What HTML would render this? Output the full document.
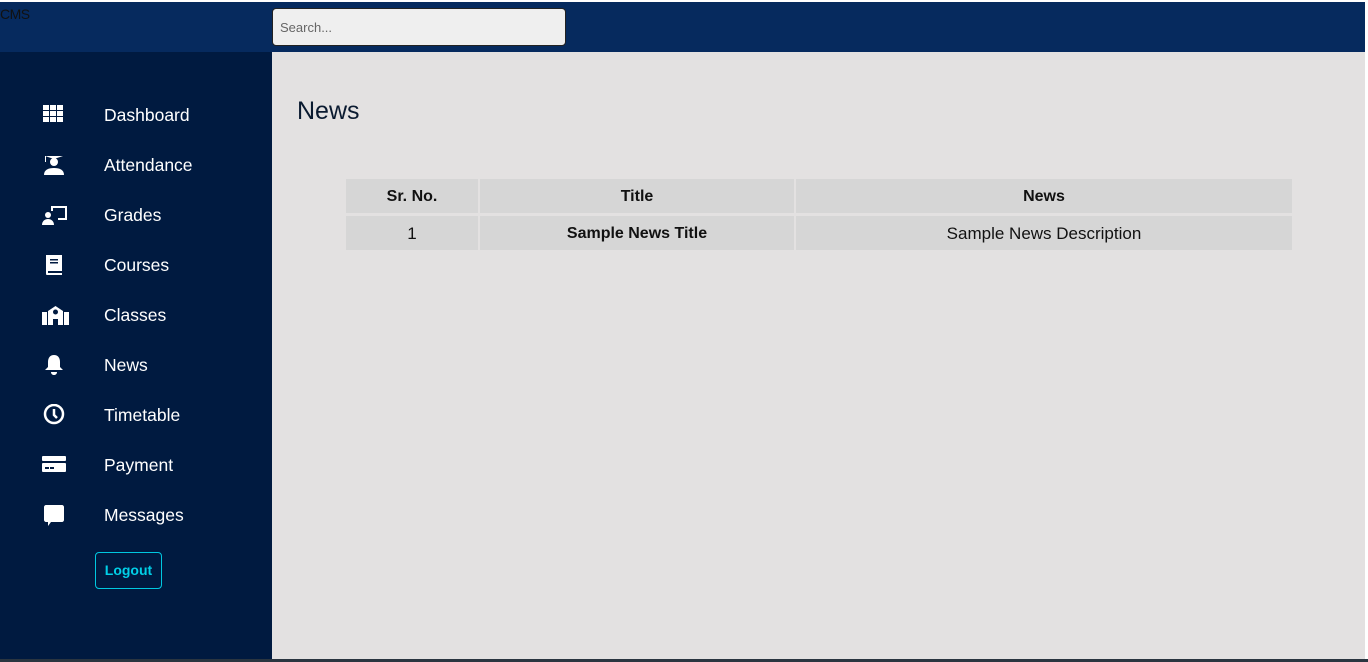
<!DOCTYPE html>
<html><head><style>
*{margin:0;padding:0;box-sizing:border-box}
body{width:1368px;height:662px;overflow:hidden;background:#fff;font-family:"Liberation Sans",sans-serif;position:relative}
.top{position:absolute;left:0;top:2px;width:1365px;height:50px;background:#062a5e}
.cms{position:absolute;left:0;top:6px;font-size:14px;color:#111;letter-spacing:-0.5px}
.search{position:absolute;left:272px;top:8px;width:294px;height:38px;background:#efefef;border:1px solid #222;border-radius:4px;font-size:13px;color:#666;padding:11px 7px}
.side{position:absolute;left:0;top:52px;width:272px;height:607px;background:#001a40}
.main{position:absolute;left:272px;top:52px;width:1093px;height:607px;background:#e3e1e1}
.bottom{position:absolute;left:0;top:659px;width:1368px;height:3px;background:#2a3540}
.item{position:absolute;left:0;height:30px;width:272px;color:#fff;font-size:17.5px}
.item svg{position:absolute;left:42px;top:4px}
.item span{position:absolute;left:104px;top:5px}
.logout{position:absolute;left:95px;top:552px;width:67px;height:37px;border:1px solid #00c8e0;border-radius:4px;color:#00d0e8;font-weight:bold;font-size:14px;text-align:center;line-height:35px}
h1{position:absolute;left:297px;top:97px;font-size:25px;font-weight:normal;color:#0a1a30}
.c{position:absolute;background:#d6d6d6;font-size:17px;color:#111;text-align:center;line-height:38px}
.b{font-weight:bold;font-size:16px}
</style></head><body>
<div class="top"></div>
<div class="cms">CMS</div>
<div class="search">Search...</div>
<div class="side"></div>
<div class="main"></div>
<div class="bottom"></div>

<div class="item" style="top:100px"><svg width="24" height="20" viewBox="0 0 24 20" fill="#fff"><rect x="1" y="1" width="6" height="5"/><rect x="8" y="1" width="6" height="5"/><rect x="15" y="1" width="6" height="5"/><rect x="1" y="7" width="6" height="5"/><rect x="8" y="7" width="6" height="5"/><rect x="15" y="7" width="6" height="5"/><rect x="1" y="13" width="6" height="5"/><rect x="8" y="13" width="6" height="5"/><rect x="15" y="13" width="6" height="5"/></svg><span>Dashboard</span></div>
<div class="item" style="top:150px"><svg width="24" height="22" viewBox="0 0 24 22" fill="#fff"><path d="M3 2h18l-9 3z"/><circle cx="12" cy="8" r="4"/><path d="M2 21c0-5 4-7 10-7s10 2 10 7z"/><rect x="3" y="2" width="1" height="6"/></svg><span>Attendance</span></div>
<div class="item" style="top:200px"><svg width="26" height="22" viewBox="0 0 26 22" fill="#fff"><path d="M9 2h16v14h-9v-2h7V4H11v3H9z"/><circle cx="6" cy="11" r="3"/><path d="M0 21c0-4 3-6 6-6s6 2 6 6z"/></svg><span>Grades</span></div>
<div class="item" style="top:250px"><svg width="24" height="22" viewBox="0 0 24 22" fill="#fff"><path d="M4 1h16v16H6v2h14v2H5c-1 0-1-1-1-2z"/><rect x="8" y="5" width="8" height="1.5" fill="#001a40"/><rect x="8" y="8" width="8" height="1.5" fill="#001a40"/></svg><span>Courses</span></div>
<div class="item" style="top:300px"><svg width="28" height="22" viewBox="0 0 28 22" fill="#fff"><path d="M0 8h5v13H0zM22 8h5v13h-5z"/><path d="M6 7l7.5-5 7.5 5v14h-5v-6h-5v6H6z"/><circle cx="13.5" cy="8" r="2.5" fill="#001a40"/></svg><span>Classes</span></div>
<div class="item" style="top:350px"><svg width="24" height="22" viewBox="0 0 24 22" fill="#fff"><path d="M12 1c4 0 6 3 6 7v5l3 3H3l3-3V8c0-4 2-7 6-7z"/><path d="M9 18h6c0 2-1.5 3-3 3s-3-1-3-3z"/></svg><span>News</span></div>
<div class="item" style="top:400px"><svg width="24" height="22" viewBox="0 0 24 22"><circle cx="12" cy="10" r="9" fill="none" stroke="#fff" stroke-width="2.5"/><path d="M12 5v6l3 3" stroke="#fff" stroke-width="2.5" fill="none"/></svg><span>Timetable</span></div>
<div class="item" style="top:450px"><svg width="26" height="22" viewBox="0 0 26 22" fill="#fff"><rect x="0" y="2" width="24" height="5" rx="1"/><rect x="0" y="9" width="24" height="9" rx="1"/><rect x="3" y="13" width="4" height="2" fill="#001a40"/><rect x="8" y="13" width="4" height="2" fill="#001a40"/></svg><span>Payment</span></div>
<div class="item" style="top:500px"><svg width="24" height="24" viewBox="0 0 24 24" fill="#fff"><path d="M2 3c0-1 1-2 2-2h16c1 0 2 1 2 2v13c0 1-1 2-2 2H9l-3 4v-4H4c-1 0-2-1-2-2z"/></svg><span>Messages</span></div>
<div class="logout">Logout</div>

<h1>News</h1>
<div class="c b" style="left:346px;top:179px;width:132px;height:34px;line-height:36px">Sr. No.</div>
<div class="c b" style="left:480px;top:179px;width:314px;height:34px;line-height:36px">Title</div>
<div class="c b" style="left:796px;top:179px;width:496px;height:34px;line-height:36px">News</div>
<div class="c" style="left:346px;top:216px;width:132px;height:34px;line-height:36px">1</div>
<div class="c b" style="left:480px;top:216px;width:314px;height:34px;line-height:36px">Sample News Title</div>
<div class="c" style="left:796px;top:216px;width:496px;height:34px;line-height:36px">Sample News Description</div>
</body></html>
